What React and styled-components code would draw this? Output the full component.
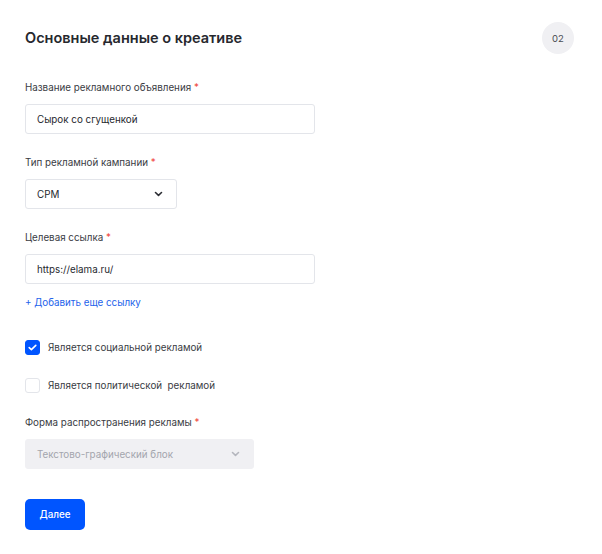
import React from "react";
import styled, { createGlobalStyle } from "styled-components";

const GlobalStyle = createGlobalStyle`
  * { box-sizing: border-box; }
  body {
    margin: 0;
    background: #fff;
    font-family: Inter, "Noto Sans", Roboto, sans-serif;
    color: #2b2d33;
  }
`;

const Chevron = ({ color }) => (
  <svg width="9" height="6" viewBox="0 0 9 6" fill="none">
    <path d="M1.5 1.5 4.5 4.3 7.5 1.5" stroke={color} strokeWidth="1.6" strokeLinecap="round" strokeLinejoin="round" />
  </svg>
);

const App = () => {
  return (
    <Page>
      <GlobalStyle />
      <Header>
        <Title>Основные данные о креативе</Title>
        <Step>02</Step>
      </Header>

      <Field>
        <Label>
          Название рекламного объявления <Req>*</Req>
        </Label>
        <Input $width={290}>Сырок со сгущенкой</Input>
      </Field>

      <Field>
        <Label>
          Тип рекламной кампании <Req>*</Req>
        </Label>
        <Select $width={152}>
          CPM
          <Chevron color="#2b2d33" />
        </Select>
      </Field>

      <Field>
        <Label>
          Целевая ссылка <Req>*</Req>
        </Label>
        <Input $width={290}>https://elama.ru/</Input>
        <AddLink>+ Добавить еще ссылку</AddLink>
      </Field>

      <Checks>
        <CheckRow>
          <Box $checked>
            <svg width="9" height="7" viewBox="0 0 9 7" fill="none">
              <path d="M1.2 3.6 3.4 5.6 7.8 1.4" stroke="#fff" strokeWidth="1.6" strokeLinecap="round" strokeLinejoin="round" />
            </svg>
          </Box>
          Является социальной рекламой
        </CheckRow>
        <CheckRow>
          <Box />
          Является политической&nbsp; рекламой
        </CheckRow>
      </Checks>

      <Field>
        <Label>
          Форма распространения рекламы <Req>*</Req>
        </Label>
        <Select $width={229} $disabled>
          Текстово-графический блок
          <Chevron color="#b4b6bd" />
        </Select>
      </Field>

      <Button>Далее</Button>
    </Page>
  );
};

const Page = styled.div`
  width: 602px;
  height: 554px;
  padding: 22px 28px 0 25px;
  display: flex;
  flex-direction: column;
  align-items: flex-start;
`;

const Header = styled.div`
  width: 100%;
  display: flex;
  align-items: center;
  justify-content: space-between;
  margin-bottom: 27px;
`;

const Title = styled.h2`
  margin: 0;
  font-size: 14.5px;
  line-height: 20px;
  font-weight: 600;
  color: #26282e;
`;

const Step = styled.div`
  width: 32px;
  height: 32px;
  border-radius: 50%;
  background: #f0f0f3;
  display: flex;
  align-items: center;
  justify-content: center;
  font-size: 9.5px;
  color: #4a4c53;
`;

const Field = styled.div`
  display: flex;
  flex-direction: column;
  align-items: flex-start;
  gap: 9px;
  margin-bottom: 22px;
`;

const Label = styled.div`
  font-size: 9.8px;
  line-height: 14px;
  color: #3a3c43;
`;

const Req = styled.span`
  color: #f0443a;
`;

const Input = styled.div`
  width: ${({ $width }) => $width}px;
  height: 30px;
  padding: 0 11px;
  display: flex;
  align-items: center;
  border: 1px solid #e3e5ea;
  border-radius: 3px;
  font-size: 9.8px;
  color: #26282e;
`;

const Select = styled(Input)`
  justify-content: space-between;
  padding-right: 13px;
  background: ${({ $disabled }) => ($disabled ? "#f0f0f3" : "#fff")};
  border-color: ${({ $disabled }) => ($disabled ? "#f0f0f3" : "#e3e5ea")};
  color: ${({ $disabled }) => ($disabled ? "#a3a5ad" : "#26282e")};
`;

const AddLink = styled.div`
  margin-top: 3px;
  font-size: 9.8px;
  line-height: 14px;
  color: #2463eb;
`;

const Checks = styled.div`
  display: flex;
  flex-direction: column;
  gap: 23px;
  margin: 8px 0 23px;
`;

const CheckRow = styled.label`
  display: flex;
  align-items: center;
  gap: 8px;
  font-size: 9.8px;
  color: #3a3c43;
`;

const Box = styled.span`
  width: 15px;
  height: 15px;
  border-radius: 3px;
  display: flex;
  align-items: center;
  justify-content: center;
  background: ${({ $checked }) => ($checked ? "#0055ff" : "#fff")};
  border: 1px solid ${({ $checked }) => ($checked ? "#0055ff" : "#e3e5ea")};
`;

const Button = styled.button`
  margin-top: 8px;
  width: 60px;
  height: 31px;
  border: none;
  border-radius: 5px;
  background: #0055ff;
  color: #fff;
  font-family: inherit;
  font-size: 9.8px;
  font-weight: 500;
`;

export default App;
